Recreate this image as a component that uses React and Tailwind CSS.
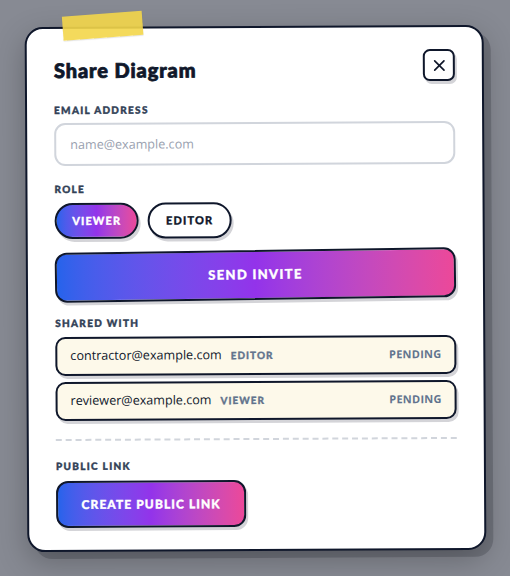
import React, { useState } from "react";

const heading = { fontFamily: "Lato, 'Noto Sans', sans-serif" };
const body = { fontFamily: "'Open Sans', 'Noto Sans', sans-serif" };

// Small uppercase section label
function Label({ children, className = "" }) {
  return (
    <div className={"h-[12px] leading-[12px] text-[10px] font-black uppercase tracking-[0.13em] text-slate-700 [-webkit-text-stroke:0.4px_#334155] " + className}>
      {children}
    </div>
  );
}

function ShareRow({ email, role }) {
  return (
    <div className="flex items-center justify-between h-[39px] px-[13px] rounded-[10px] border-2 border-slate-900 bg-[#fdf9ea] shadow-[2px_3px_0_#d4d4d8]">
      <div className="flex items-center gap-[9px]">
        <span className="text-[12.6px] text-slate-900" style={body}>{email}</span>
        <span className="text-[10px] font-black tracking-[0.1em] text-slate-500 [-webkit-text-stroke:0.3px_#64748b]">{role}</span>
      </div>
      <span className="text-[11px] font-bold tracking-[0.02em] text-slate-500" style={body}>PENDING</span>
    </div>
  );
}

const gradient = "bg-gradient-to-r from-[#2563eb] via-[#9333ea] to-[#ec4899]";

export default function App() {
  const [role, setRole] = useState("viewer"); // selected role pill
  const [email, setEmail] = useState("");

  return (
    <div className="min-h-screen w-full bg-[#878a93] flex items-start justify-center pt-[26px]" style={heading}>
      <div className="relative w-[459px] -rotate-[0.3deg]">
        {/* hard card shadow */}
        <div className="absolute inset-0 translate-x-[7px] translate-y-[7px] rounded-[18px] bg-[#70737c]" />
        {/* tape */}
        <div className="absolute left-[38px] -top-[13px] w-[80px] h-[24px] bg-[#f3d64a]/90 -rotate-[4deg] z-20 shadow-[0_1px_1px_rgba(0,0,0,0.1)]" />

        <div className="relative rounded-[18px] border-2 border-slate-900 bg-white px-[27px] pt-[22px] pb-[22px] shadow-[0_10px_30px_rgba(0,0,0,0.25)]">
          {/* header */}
          <div className="flex items-start justify-between">
            <h2 className="mt-[6px] leading-[26px] text-[20px] font-black tracking-[0.045em] text-slate-900 [-webkit-text-stroke:0.8px_#0f172a]">Share Diagram</h2>
            <button className="w-[32px] h-[32px] rounded-[7px] border-2 border-slate-900 bg-white flex items-center justify-center shadow-[2px_3px_0_#d4d4d8]">
              <svg width="13" height="13" viewBox="0 0 14 14" fill="none" stroke="#0f172a" strokeWidth="1.8" strokeLinecap="round">
                <path d="M2 2l10 10M12 2L2 12" />
              </svg>
            </button>
          </div>

          <Label className="mt-[21px]">Email Address</Label>
          <input
            type="text"
            value={email}
            onChange={(e) => setEmail(e.target.value)}
            placeholder="name@example.com"
            className="block mt-[7px] w-full h-[43px] rounded-[11px] border-2 border-gray-300 px-[14px] text-[12.6px] text-slate-900 placeholder:text-gray-400 outline-none"
            style={body}
          />

          <Label className="mt-[17px]">Role</Label>
          <div className="mt-[8px] flex gap-[9px]">
            {["viewer", "editor"].map((r) => (
              <button
                key={r}
                onClick={() => setRole(r)}
                className={
                  role === r
                    ? "w-[84px] h-[36px] rounded-full border-2 border-slate-900 " + gradient + " text-white text-[11px] font-black tracking-[0.1em] uppercase [-webkit-text-stroke:0.3px_#fff] shadow-[2px_3px_0_#d4d4d8]"
                    : "w-[84px] h-[36px] rounded-full border-2 border-slate-900 bg-white text-slate-900 text-[11px] font-black tracking-[0.1em] uppercase [-webkit-text-stroke:0.3px_#0f172a] shadow-[2px_3px_0_#d4d4d8]"
                }
              >
                {r}
              </button>
            ))}
          </div>

          <button className={"block mt-[12px] w-[401px] h-[50px] rounded-[12px] border-2 border-slate-900 " + gradient + " text-white text-[13px] font-black tracking-[0.1em] [-webkit-text-stroke:0.35px_#fff] shadow-[2px_3px_0_#d4d4d8] -rotate-[0.5deg]"}>
            SEND INVITE
          </button>

          <Label className="mt-[16px]">Shared With</Label>
          <div className="mt-[8px] flex flex-col gap-[6px]">
            <ShareRow email="contractor@example.com" role="EDITOR" />
            <ShareRow email="reviewer@example.com" role="VIEWER" />
          </div>

          <div className="mt-[18px] border-t-2 border-dashed border-gray-300" />

          <Label className="mt-[19px]">Public Link</Label>
          <button className={"block mt-[9px] w-[190px] h-[47px] rounded-[12px] border-2 border-slate-900 " + gradient + " text-white text-[12px] font-black tracking-[0.09em] [-webkit-text-stroke:0.35px_#fff] shadow-[2px_3px_0_#d4d4d8]"}>
            CREATE PUBLIC LINK
          </button>
        </div>
      </div>
    </div>
  );
}
